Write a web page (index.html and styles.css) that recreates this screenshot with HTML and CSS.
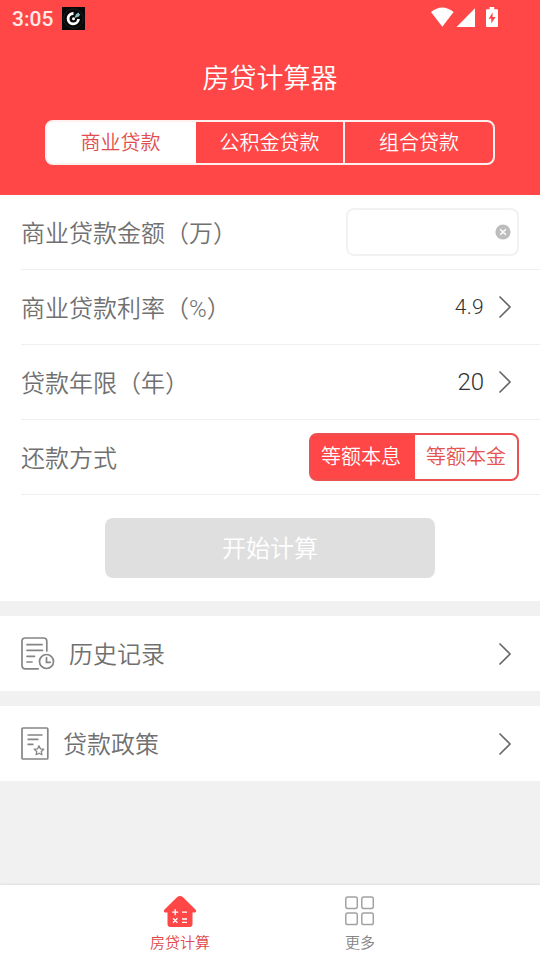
FILE: index.html
```html
<!DOCTYPE html>
<html lang="zh-CN">
<head>
<meta charset="utf-8">
<title>房贷计算器</title>
<link rel="stylesheet" href="styles.css">
</head>
<body>
<header class="header">
  <div class="status">
    <span class="time">3:05</span>
    <svg class="app" width="23" height="23" viewBox="0 0 23 23"><rect width="23" height="23" fill="#080808"/><circle cx="11.500" cy="11.500" r="9.800" fill="none" stroke="#272727" stroke-width=".7"/><path d="M11.500 6.500A5.200 5.200 0 1 0 16.500 12" fill="none" stroke="#fff" stroke-width="2.800"/><circle cx="11.500" cy="11.800" r="1.500" fill="#fff"/><path d="M12.200 11l2-4 2.600-1.500.4 1.500 1.200.5-2 2.300z" fill="#8dbabb"/></svg>
    <svg class="signals" width="68" height="22" viewBox="0 0 68 22"><g fill="#fff"><path d="M0 5Q11.300-4 22.600 5L11.300 19.800z"/><path d="M25.500 20L44 1.300V20z"/><path d="M56 2.200h2.600V0h4.600v2.200H66q1 0 1 1V19q0 1-1 1H56q-1 0-1-1V3.200q0-1 1-1z"/></g><path d="M61.600 5.500l-4 6.300h2.700v4.800l4.300-6.600h-3z" fill="#ff4747"/></svg>
  </div>
  <h1 class="title">房贷计算器</h1>
  <nav class="segments">
    <span class="segment selected">商业贷款</span>
    <span class="segment">公积金贷款</span>
    <span class="segment">组合贷款</span>
  </nav>
</header>
<main>
  <section class="form">
    <div class="row"><span class="label">商业贷款金额（万）</span>
      <span class="input"><svg width="16" height="16" viewBox="0 0 16 16"><circle cx="8" cy="8" r="7.600" fill="#bdbdbd"/><path d="M5.200 5.200l5.600 5.600m0-5.600l-5.600 5.600" stroke="#fff" stroke-width="1.500"/></svg></span>
    </div>
    <div class="row"><span class="label">商业贷款利率（%）</span><span class="value rate">4.9</span><svg class="chevron" width="14" height="24" viewBox="0 0 14 24"><path d="M1.500 1.500L12 12L1.500 22.500"/></svg></div>
    <div class="row"><span class="label">贷款年限（年）</span><span class="value">20</span><svg class="chevron" width="14" height="24" viewBox="0 0 14 24"><path d="M1.500 1.500L12 12L1.500 22.500"/></svg></div>
    <div class="row"><span class="label">还款方式</span>
      <span class="toggle"><span class="option active">等额本息</span><span class="option">等额本金</span></span>
    </div>
    <button class="submit">开始计算</button>
  </section>
  <section class="link">
    <svg class="icon" width="34" height="34" viewBox="0 0 34 34"><g fill="none" stroke="#858585" stroke-width="1.700" stroke-linecap="round"><path d="M17.200 31.800H4.300Q1 31.800 1 28.500V4.200Q1 1 4.300 1H22.500Q25.800 1 25.800 4.200V14"/><path d="M6 7.700h15M6 13.300h15.500M6 19.300h7.500M6 25h5"/><circle cx="25.500" cy="24.500" r="7"/><path d="M25.500 20.500v4.800h3.800"/></g></svg>
    <span class="label">历史记录</span>
    <svg class="chevron" width="14" height="24" viewBox="0 0 14 24"><path d="M1.500 1.500L12 12L1.500 22.500"/></svg>
  </section>
  <section class="link">
    <svg class="icon" width="28" height="34" viewBox="0 0 28 34"><g fill="none" stroke="#858585" stroke-width="1.700"><rect x="1" y="1" width="25.800" height="31" rx="1"/><path d="M6.500 8h15M6.500 12.300h11M6.500 17.300h6"/><path stroke-width="1.300" stroke-linejoin="round" d="M18 18.800l1.400 3 3.300.4-2.400 2.300.6 3.300-2.900-1.600-2.900 1.600.6-3.300-2.400-2.300 3.300-.4z"/></g></svg>
    <span class="label">贷款政策</span>
    <svg class="chevron" width="14" height="24" viewBox="0 0 14 24"><path d="M1.500 1.500L12 12L1.500 22.500"/></svg>
  </section>
</main>
<footer class="tabs">
  <div class="tab current">
    <svg width="34" height="32" viewBox="0 0 34 32"><path d="M17 0q1.700 0 3 1.200L32.500 13.500q1.300 1.400.3 2.500-.6.600-1.800.6h-1.500V28q0 3-3 3h-19q-3 0-3-3V16.600H3q-1.200 0-1.800-.6-1-1.100.3-2.500L14 1.200Q15.300 0 17 0z" fill="#ff4747"/><path d="M9.200 16.200h6M12.200 13.200v6M19 16.200h5M10 22.300l4.400 4.400m0-4.400L10 26.700M19 23h5M19 26.300h5" stroke="#fff" stroke-width="1.300" fill="none"/></svg>
    <span>房贷计算</span>
  </div>
  <div class="tab">
    <svg width="34" height="32" viewBox="0 0 34 32"><g fill="none" stroke="#a2a2a2" stroke-width="1.500"><rect x="2.800" y=".9" width="11.500" height="11.500" rx="1.800"/><rect x="18.800" y=".9" width="11.500" height="11.500" rx="1.800"/><rect x="2.800" y="17" width="11.500" height="11.500" rx="1.800"/><rect x="18.800" y="17" width="11.500" height="11.500" rx="1.800"/></g></svg>
    <span>更多</span>
  </div>
</footer>
</body>
</html>
```
FILE: styles.css
```css
* { box-sizing: border-box; }
body {
  margin: 0;
  height: 960px;
  display: flex;
  flex-direction: column;
  background: #f1f1f1;
  color: #707070;
  font-family: Roboto, "Noto Sans CJK SC", sans-serif;
  font-weight: 350;
}
svg { display: block; flex: none; }
main { flex: 1; }
.header {
  height: 195px;
  background: #ff4747;
  color: #fff;
}
.status {
  height: 38px;
  padding: 7px 41px 0 12px;
  display: flex;
  align-items: flex-start;
}
.time {
  width: 50px;
  font-size: 21px;
  line-height: 24px;
  font-weight: 500;
  color: #ffe9e9;
}
.signals { margin-left: auto; }
.title {
  margin: 21px 0 0;
  font-size: 27px;
  line-height: 40px;
  font-weight: 350;
  text-align: center;
}
.segments {
  width: 450px;
  height: 45px;
  margin: 21px auto 0;
  border: 2px solid #fff0f0;
  border-radius: 8px;
  background: linear-gradient(to right, #fff 151px, transparent 151px) border-box;
  display: grid;
  grid-template-columns: 147px 149px 1fr;
}
.segment {
  font-size: 20px;
  line-height: 43px;
  text-align: center;
}
.segment + .segment { border-left: 2px solid #fff0f0; }
.segment.selected { color: #e14d4d; }
.segment.selected + .segment { border-left-color: #fff; }
.form {
  height: 406px;
  background: #fff;
}
.row {
  height: 75px;
  margin-left: 21px;
  padding-right: 21px;
  border-bottom: 1px solid #efefef;
  display: flex;
  align-items: center;
}
.label {
  flex: 1;
  padding-top: 3px;
  font-size: 24px;
  line-height: 36px;
}
.input {
  width: 173px;
  height: 48px;
  padding-right: 6px;
  border: 2px solid #f2f2f2;
  border-radius: 8px;
  display: flex;
  align-items: center;
  justify-content: flex-end;
}
.value {
  margin-right: 14px;
  font-size: 24px;
  font-weight: 350;
  color: #303030;
}
.rate { font-size: 21px; letter-spacing: .3px; }
.chevron {
  margin-right: 7px;
  fill: none;
  stroke: #666;
  stroke-width: 1.6;
}
.toggle {
  width: 210px;
  height: 48px;
  border: 2px solid #ed5050;
  border-radius: 8px;
  background: linear-gradient(to right, #ff4747 106px, transparent 106px) border-box;
  display: flex;
}
.option {
  flex: 1;
  font-size: 20px;
  line-height: 45px;
  text-align: center;
  color: #e45252;
}
.active {
  flex: 0 0 104px;
  padding-right: 4px;
  color: #fff;
}
.submit {
  display: block;
  width: 330px;
  height: 60px;
  margin: 23px auto 0;
  padding: 0 0 3px;
  border: 0;
  border-radius: 8px;
  background: #dfdfdf;
  color: #fff;
  font: inherit;
  font-size: 24px;
}
.link {
  height: 75px;
  margin-top: 15px;
  padding: 0 21px;
  background: #fff;
  display: flex;
  align-items: center;
  gap: 14px;
}
.tabs {
  height: 75px;
  padding: 11px 90px 0;
  background: #fff;
  box-shadow: 0 -1px 2px rgba(0, 0, 0, .08);
  display: flex;
}
.tab {
  flex: 1;
  display: flex;
  flex-direction: column;
  align-items: center;
  font-size: 15px;
  line-height: 22px;
  gap: 4px;
  color: #858585;
}
.current { color: #df4a4a; }
```
